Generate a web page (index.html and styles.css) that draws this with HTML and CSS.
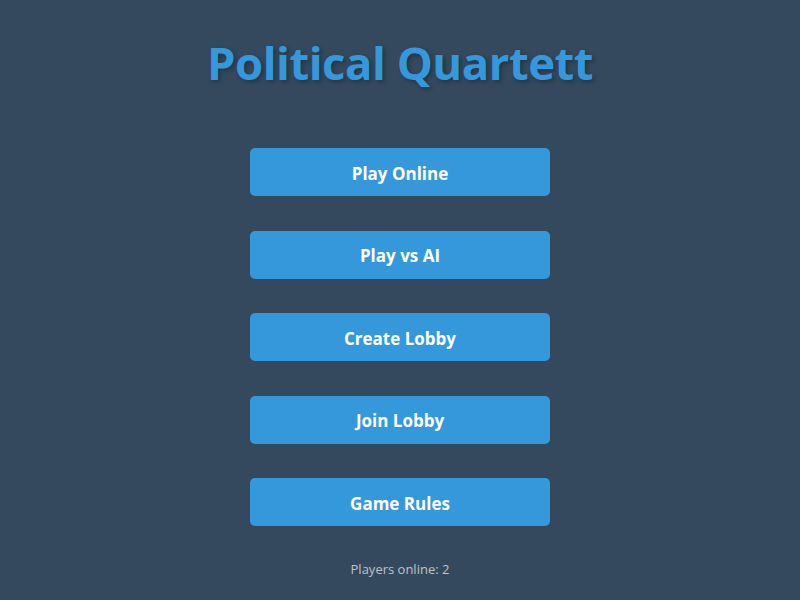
FILE: index.html
```html
<!DOCTYPE html>
<html>
<head>
<meta charset="utf-8">
<link rel="stylesheet" href="styles.css">
</head>
<body>
<main class="menu">
  <h1 class="title">Political Quartett</h1>
  <div class="buttons">
    <button class="btn">Play Online</button>
    <button class="btn">Play vs AI</button>
    <button class="btn">Create Lobby</button>
    <button class="btn">Join Lobby</button>
    <button class="btn">Game Rules</button>
  </div>
  <p class="status">Players online: 2</p>
</main>
</body>
</html>
```
FILE: styles.css
```css
html, body {
  margin: 0;
  padding: 0;
  height: 100%;
  background: #34495e;
}
body {
  font-family: "Open Sans", "Noto Sans", sans-serif;
}
.menu {
  display: flex;
  flex-direction: column;
  align-items: center;
}
.title {
  margin: 32px 0 0;
  height: 60px;
  line-height: 60px;
  font-size: 45.5px;
  font-weight: 700;
  color: #3498db;
  text-shadow: 2px 2px 4px rgba(0,0,0,0.3);
  letter-spacing: -0.5px;
}
.buttons {
  margin-top: 56px;
  display: flex;
  flex-direction: column;
  gap: 34.5px;
}
.btn {
  width: 300px;
  height: 48px;
  border: none;
  border-radius: 5px;
  background: #3498db;
  color: #fff;
  font-family: "Open Sans", "Noto Sans", sans-serif;
  font-weight: 700;
  font-size: 17px;
  padding: 2px 0 0;
}
.status {
  margin: 34px 0 0;
  font-size: 13px;
  line-height: 18px;
  color: #bdc3c7;
}
```
